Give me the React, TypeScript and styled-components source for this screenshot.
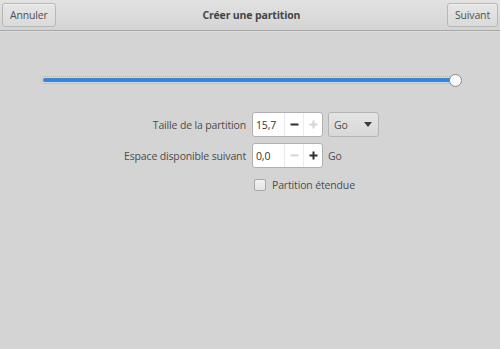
import React from "react";
import styled, { createGlobalStyle } from "styled-components";

const GlobalStyle = createGlobalStyle`
  html, body {
    margin: 0;
    padding: 0;
    background: #d4d4d4;
  }
  body {
    font-family: "Open Sans", "Noto Sans", sans-serif;
    font-size: 10.5px;
    letter-spacing: -0.15px;
    color: #4d4d4d;
  }
`;

const MinusIcon = () => (
  <svg width="9" height="9" viewBox="0 0 9 9">
    <path d="M0.5 4.5H8.5" stroke="currentColor" strokeWidth="2" />
  </svg>
);

const PlusIcon = () => (
  <svg width="9" height="9" viewBox="0 0 9 9">
    <path d="M0.5 4.5H8.5M4.5 0.5V8.5" stroke="currentColor" strokeWidth="2" />
  </svg>
);

const App: React.FC = () => {
  return (
    <>
      <GlobalStyle />
      <Window>
        <Header>
          <HeaderButton>Annuler</HeaderButton>
          <Title>Créer une partition</Title>
          <HeaderButton>Suivant</HeaderButton>
        </Header>
        <SliderArea>
          <Trough>
            <Fill />
            <Knob />
          </Trough>
        </SliderArea>
        <Form>
          <Label>Taille de la partition</Label>
          <Controls>
            <SpinButton>
              <SpinEntry>15,7</SpinEntry>
              <SpinStep>
                <MinusIcon />
              </SpinStep>
              <SpinStep $disabled>
                <PlusIcon />
              </SpinStep>
            </SpinButton>
            <Combo>
              <span>Go</span>
              <Arrow />
            </Combo>
          </Controls>
          <Label>Espace disponible suivant</Label>
          <Controls>
            <SpinButton>
              <SpinEntry>0,0</SpinEntry>
              <SpinStep $disabled>
                <MinusIcon />
              </SpinStep>
              <SpinStep>
                <PlusIcon />
              </SpinStep>
            </SpinButton>
            <Unit>Go</Unit>
          </Controls>
          <span />
          <CheckRow>
            <CheckBox />
            <span>Partition étendue</span>
          </CheckRow>
        </Form>
      </Window>
    </>
  );
};

export default App;

const Window = styled.div`
  width: 500px;
  height: 349px;
  background: #d4d4d4;
  overflow: hidden;
`;

const Header = styled.div`
  height: 31px;
  box-sizing: border-box;
  display: flex;
  align-items: flex-start;
  justify-content: space-between;
  padding: 3px 2px 0 2px;
  background: linear-gradient(#e2e2e2, #d4d4d4);
  border-bottom: 1px solid #a6a6a6;
  box-shadow: 0 1px 0 #dcdcdc;
`;

const HeaderButton = styled.div`
  height: 24px;
  box-sizing: border-box;
  padding: 0 7px;
  display: flex;
  align-items: center;
  border: 1px solid #b8b8b8;
  border-radius: 3px;
  background: linear-gradient(#e6e6e6, #dadada);
  box-shadow: inset 0 1px 0 #f0f0f0;
  color: #505050;
`;

const Title = styled.div`
  font-weight: 700;
  line-height: 24px;
  color: #454545;
`;

const SliderArea = styled.div`
  padding: 45px 0 0 41px;
  height: 81px;
  box-sizing: border-box;
`;

const Trough = styled.div`
  position: relative;
  width: 416px;
  height: 8px;
  box-sizing: border-box;
  border: 1px dotted #b4b4b4;
  border-radius: 4px;
  padding: 1px 1px;
  display: flex;
  align-items: center;
`;

const Fill = styled.div`
  flex: 1;
  height: 4px;
  border-radius: 2px;
  background: #3a84d8;
`;

const Knob = styled.div`
  position: absolute;
  right: -6px;
  top: 50%;
  width: 13px;
  height: 13px;
  box-sizing: border-box;
  margin-top: -6.5px;
  border-radius: 50%;
  border: 1px solid #8a8a8a;
  background: linear-gradient(#ffffff, #f4f4f4);
`;

const Form = styled.div`
  display: grid;
  grid-template-columns: 246px auto;
  grid-template-rows: 25px 25px 22px;
  column-gap: 6px;
  row-gap: 6px;
`;

const Label = styled.div`
  justify-self: end;
  align-self: center;
  white-space: nowrap;
  color: #4d4d4d;
`;

const Controls = styled.div`
  display: flex;
  align-items: center;
  gap: 5px;
`;

const SpinButton = styled.div`
  display: flex;
  height: 25px;
  box-sizing: border-box;
  border: 1px solid #b0b0b0;
  border-radius: 3px;
  background: #fff;
`;

const SpinEntry = styled.div`
  width: 32px;
  padding-left: 3px;
  box-sizing: border-box;
  display: flex;
  align-items: center;
  color: #333;
  border-right: 1px solid #e8e8e8;
`;

const SpinStep = styled.div<{ $disabled?: boolean }>`
  width: 18px;
  display: flex;
  align-items: center;
  justify-content: center;
  color: ${(p) => (p.$disabled ? "#d4d4d4" : "#2e2e2e")};
  & + & {
    border-left: 1px solid #ececec;
  }
`;

const Combo = styled.div`
  width: 51px;
  height: 25px;
  box-sizing: border-box;
  padding: 0 6px 0 5px;
  display: flex;
  align-items: center;
  justify-content: space-between;
  border: 1px solid #b4b4b4;
  border-radius: 3px;
  background: linear-gradient(#e4e4e4, #d8d8d8);
  color: #4d4d4d;
`;

const Arrow = styled.div`
  width: 0;
  height: 0;
  border-left: 4.5px solid transparent;
  border-right: 4.5px solid transparent;
  border-top: 5px solid #3a3a3a;
`;

const Unit = styled.span`
  color: #4d4d4d;
`;

const CheckRow = styled.div`
  display: flex;
  align-items: center;
  gap: 6px;
  padding-left: 2px;
  color: #4d4d4d;
`;

const CheckBox = styled.div`
  width: 12px;
  height: 12px;
  box-sizing: border-box;
  border: 1px solid #a8a8a8;
  border-radius: 2px;
  background: linear-gradient(#f2f2f2, #e4e4e4);
`;
